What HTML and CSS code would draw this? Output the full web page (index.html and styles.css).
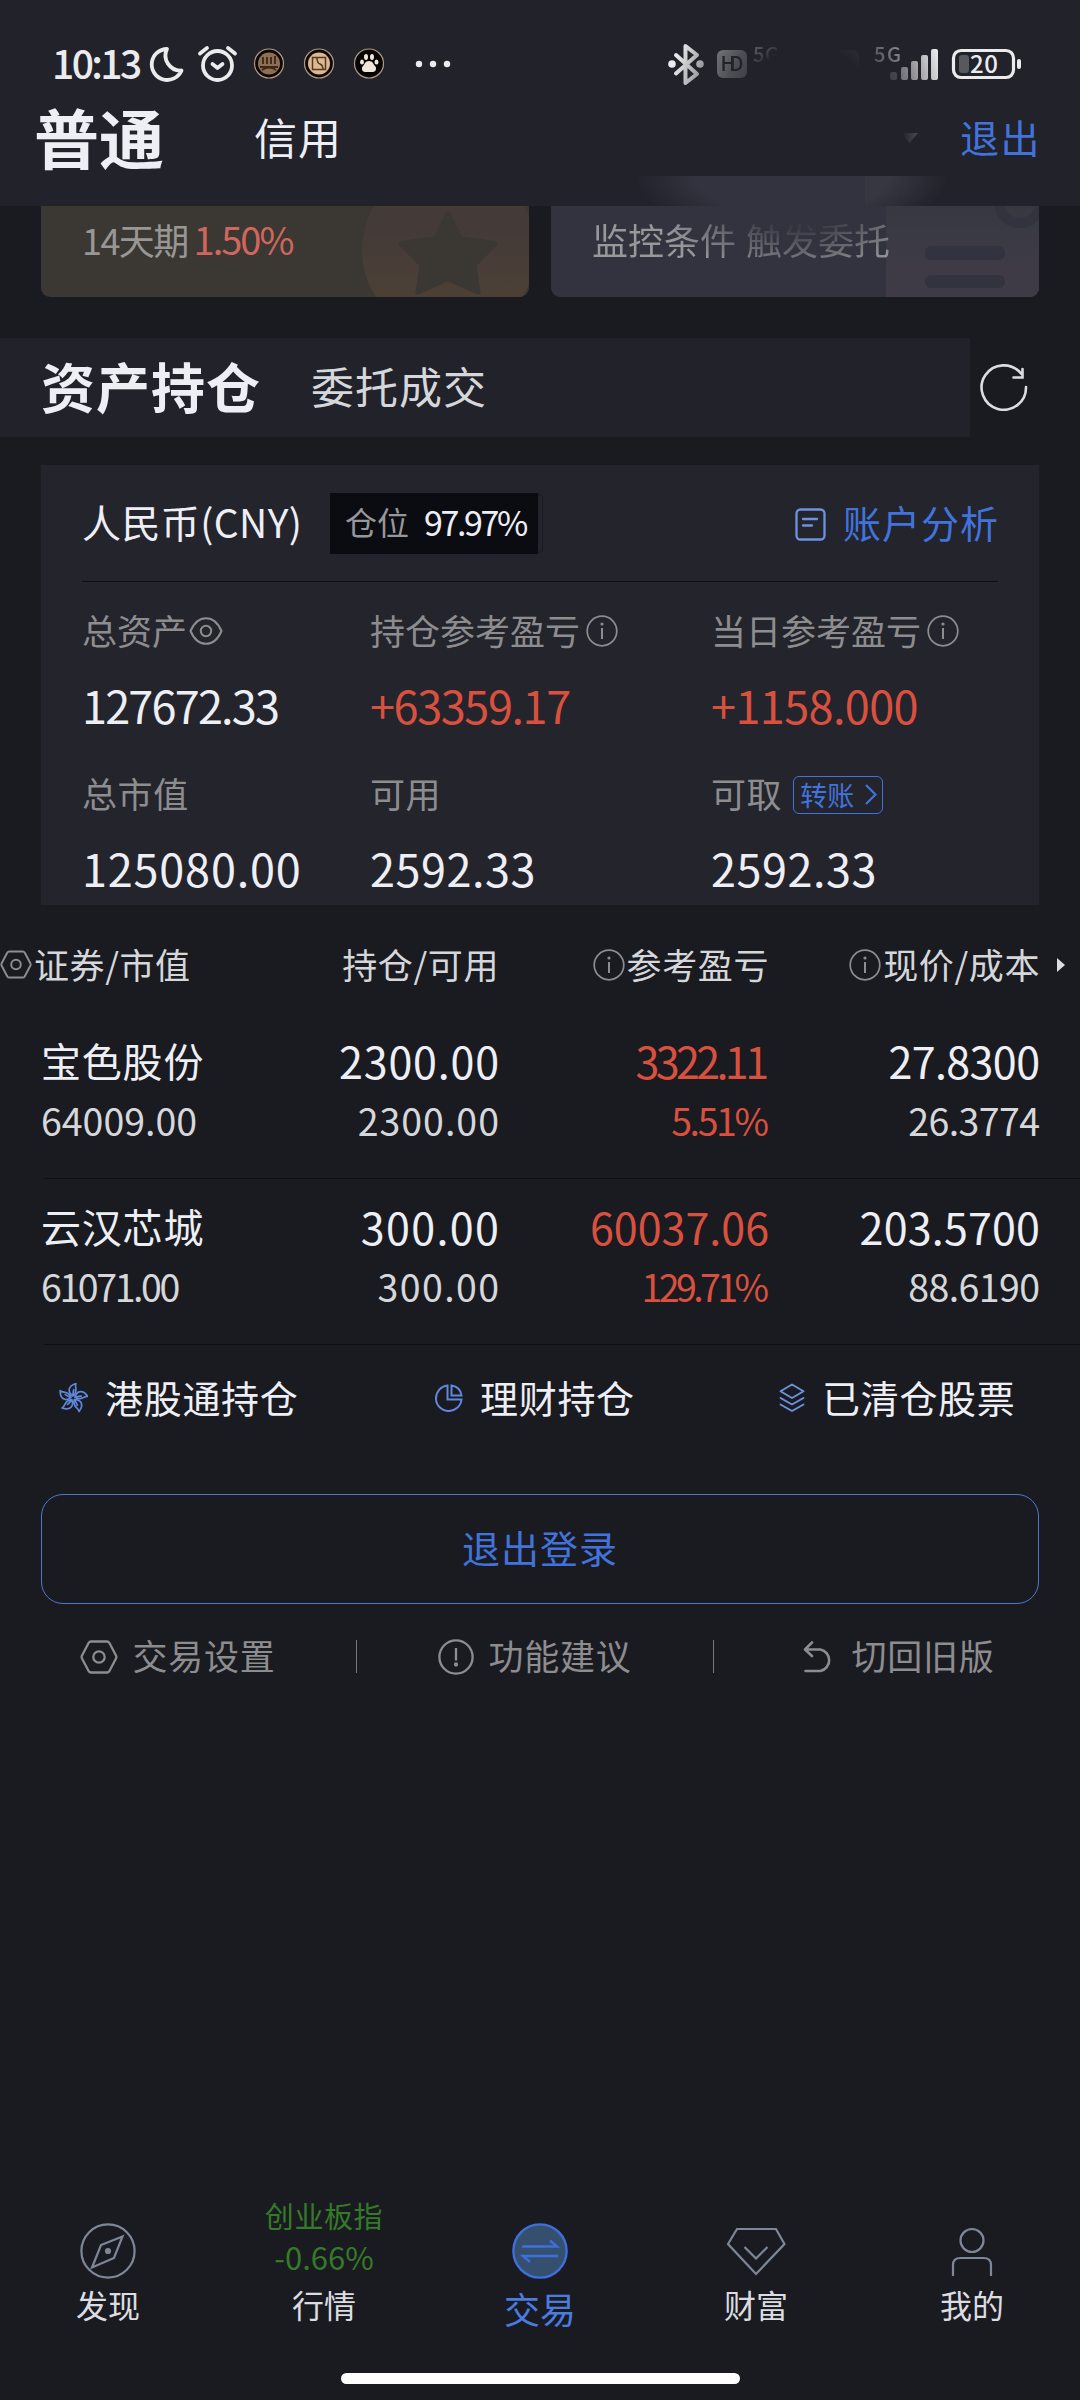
FILE: index.html
```html
<!DOCTYPE html>
<html lang="zh-CN">
<head>
  <meta charset="UTF-8">
  <title>普通交易</title>
  <link rel="stylesheet" href="styles.css">
</head>
<body>
  <svg class="defs" width="0" height="0">
    <symbol id="info" viewBox="0 0 32 32">
      <circle cx="16" cy="16" r="14.8" fill="none" stroke="currentColor" stroke-width="1.7"/>
      <circle cx="16" cy="9" r="1.6" fill="currentColor"/>
      <path d="M16 13v11" stroke="currentColor" stroke-width="2"/>
    </symbol>
    <symbol id="hex" viewBox="0 0 38 34">
      <path d="M11 1.5h16q1.5 0 2.3 1.3L36 15.5q.8 1.5 0 3L29.3 31.2q-.8 1.3-2.3 1.3H11q-1.5 0-2.3-1.3L2 18.5q-.8-1.5 0-3L8.7 2.8Q9.5 1.5 11 1.5z" fill="none" stroke="currentColor" stroke-width="2.3"/>
      <circle cx="19" cy="17" r="5.7" fill="none" stroke="currentColor" stroke-width="2.3"/>
    </symbol>
  </svg>

  <header class="header">
    <div class="status">
      <span class="clock">10:13</span>
      <svg class="status-left" width="310" height="40" viewBox="145 44 310 40">
        <path d="M167 49a15.5 15.5 0 1 0 14.5 21.5a15 15 0 0 1-14.5-21.5z" fill="none" stroke="#ebebee" stroke-width="3.8" stroke-linejoin="round"/>
        <g fill="none" stroke="#ebebee" stroke-width="3.8" stroke-linecap="round" stroke-linejoin="round">
          <circle cx="217.5" cy="65.5" r="14.5"/>
          <path d="M212.5 64l5 4 5-4M200 53.5l7-5.5M235 53.5l-7-5.5"/>
        </g>
        <g stroke-width="1.2" stroke="#b59a83">
          <circle cx="269" cy="63.5" r="14.5" fill="#0c0806"/>
          <circle cx="319" cy="63.5" r="14.5" fill="#0c0806"/>
          <circle cx="369" cy="63.5" r="14.5" fill="#050505"/>
        </g>
        <circle cx="269" cy="63.5" r="11" fill="#8f6f54"/>
        <path d="M263 57v7M267 57v7M271 57v7M275 56v8M260 67h18M262 70q7-5 14 0" fill="none" stroke="#3d2718" stroke-width="1.8"/>
        <circle cx="319" cy="63.5" r="11" fill="#dcb892"/>
        <path d="M312.5 57.5h13v12h-13zM317 58q0 5 3 6t3 6" fill="none" stroke="#57371d" stroke-width="1.5"/>
        <g fill="#f3e6d6">
          <ellipse cx="366" cy="57" rx="2" ry="3"/><ellipse cx="372" cy="57" rx="2" ry="3"/>
          <ellipse cx="362" cy="62" rx="2" ry="2.6"/><ellipse cx="376.5" cy="62" rx="2" ry="2.6"/>
          <path d="M369 61c4 0 4 3 6 5s1 6-2 6h-8c-3 0-4-4-2-6s2-5 6-5z"/>
        </g>
        <g fill="#ebebee"><circle cx="419" cy="64" r="3.2"/><circle cx="433" cy="64" r="3.2"/><circle cx="447" cy="64" r="3.2"/></g>
      </svg>
      <svg class="status-right" width="360" height="40" viewBox="664 44 360 40">
        <defs>
          <radialGradient id="fade" gradientUnits="userSpaceOnUse" cx="808" cy="105" r="140">
            <stop offset=".42" stop-color="#000"/>
            <stop offset=".5" stop-color="#333"/>
            <stop offset=".6" stop-color="#444"/>
            <stop offset=".74" stop-color="#777"/>
            <stop offset="1" stop-color="#fff"/>
          </radialGradient>
          <mask id="fadeMask" maskUnits="userSpaceOnUse" x="660" y="20" width="290" height="80"><rect x="660" y="20" width="290" height="80" fill="url(#fade)"/></mask>
        </defs>
        <g mask="url(#fadeMask)">
          <path d="M676 55l21 19-11.500 9V46l11.500 9-21 18.500" fill="none" stroke="#ebebee" stroke-width="4" stroke-linejoin="round" stroke-linecap="round"/>
          <circle cx="672" cy="64" r="3.8" fill="#ebebee"/><circle cx="700" cy="64" r="3.8" fill="#ebebee"/>
          <rect x="717" y="50" width="30" height="28" rx="6" fill="#c8c8cc"/>
          <rect x="829" y="50" width="30" height="28" rx="6" fill="#aaa" opacity=".25"/>
          <g class="net" fill="#22222a"><text x="720.5" y="71" textLength="23">HD</text></g>
          <g class="net" fill="#ebebee"><text x="753" y="62" textLength="26">5G</text><text x="874" y="62" textLength="27">5G</text></g>
          <g fill="#ebebee">
            <rect x="890" y="72" width="7" height="8" rx="2" opacity=".5"/><rect x="901" y="67" width="7" height="13" rx="2"/>
            <rect x="911" y="61" width="7" height="19" rx="2"/><rect x="921" y="55" width="7" height="25" rx="2"/>
            <rect x="931" y="49" width="7" height="31" rx="2"/>
          </g>
        </g>
        <rect x="953.5" y="50.5" width="60" height="27" rx="7.5" fill="none" stroke="#ebebee" stroke-width="3.2"/>
        <rect x="959" y="55" width="10" height="18" rx="3" fill="#58595f"/>
        <rect x="1017" y="59" width="4" height="10" rx="2" fill="#ebebee"/>
        <text class="battery" x="970" y="73" textLength="28">20</text>
      </svg>
    </div>
    <div class="account-tabs">
      <span class="tab-main">普通</span>
      <span class="tab-sub">信用</span>
      <svg class="caret" width="18" height="12" viewBox="0 0 18 12">
        <linearGradient id="cg"><stop offset=".1" stop-color="#22222a"/><stop offset="1" stop-color="#4a4b52"/></linearGradient>
        <path d="M0 1h17l-8.500 10z" fill="url(#cg)"/>
      </svg>
      <a class="quit">退出</a>
    </div>
    <div class="peek"></div>
  </header>

  <section class="banners">
    <div class="banner gold">
      <span class="term">14天期</span><span class="rate">1.50%</span>
      <svg class="art" width="170" height="91" viewBox="359 206 170 91">
        <linearGradient id="gg" x2="0" y2="1"><stop offset=".4" stop-color="#443a37"/><stop offset=".8" stop-color="#4d4136"/></linearGradient>
        <circle cx="449" cy="250" r="87" fill="url(#gg)"/>
        <path d="M448 214l12 25 35 4.500-21 21.500 4 27-30-13.500-30 13.500 4-27-21-21.500 35-4.500z" fill="#3b3733" stroke="#3b3733" stroke-width="5" stroke-linejoin="round"/>
      </svg>
    </div>
    <div class="banner slate">
      <span class="watch">监控条件 触发委托</span>
      <svg class="art" width="153" height="91" viewBox="886 206 153 91">
        <linearGradient id="sg" x2="0" y2="1"><stop offset="0" stop-color="#373842"/><stop offset=".7" stop-color="#3e3b47"/></linearGradient>
        <rect x="886" y="206" width="153" height="91" fill="url(#sg)"/>
        <circle cx="1020" cy="202" r="21" fill="none" stroke="#32333e" stroke-width="10"/>
        <rect x="925" y="246" width="80" height="14" rx="6" fill="#32333e"/>
        <rect x="925" y="275" width="80" height="13" rx="6" fill="#32333e"/>
      </svg>
    </div>
  </section>

  <section class="section-tabs">
    <div class="band"><span class="holdings-tab">资产持仓</span><span class="orders-tab">委托成交</span></div>
    <svg class="refresh" width="48" height="48" viewBox="0 0 48 48" fill="none" stroke="#dcdde0" stroke-width="2.6" stroke-linecap="round">
      <path d="M46 24A22.200 22.200 0 1 1 41 10.500M42.500 6v8.500h-9"/>
    </svg>
  </section>

  <section class="assets">
    <div class="assets-head">
      <span class="currency">人民币(CNY)</span>
      <div class="position-wrap"><div class="position"><span class="position-label">仓位</span><span class="position-num">97.97%</span></div></div>
      <a class="analysis">
        <svg width="31" height="33" viewBox="0 0 31 33" fill="none" stroke="#6d93e0" stroke-width="2.3" stroke-linecap="round">
          <rect x="1.5" y="1.5" width="28" height="30" rx="4"/><path d="M8 11h14M8 17.500h9"/>
        </svg>
        <span>账户分析</span>
      </a>
    </div>
    <div class="assets-grid">
      <div class="label">总资产<svg class="eye" width="34" height="28" viewBox="0 0 34 28" fill="none" stroke="currentColor" stroke-width="2"><path d="M1.500 14Q7 1.200 17 1.200T32.500 14Q27 26.800 17 26.800T1.500 14z"/><circle cx="17" cy="14" r="5.2"/></svg></div>
      <div class="label">持仓参考盈亏<svg class="i" width="32" height="32"><use href="#info"/></svg></div>
      <div class="label">当日参考盈亏<svg class="i" width="32" height="32"><use href="#info"/></svg></div>
      <div class="value n-18">127672.33</div>
      <div class="value up n-14">+63359.17</div>
      <div class="value up n-6">+1158.000</div>
      <div class="label wide">总市值</div>
      <div class="label wide">可用</div>
      <div class="label wide">可取<a class="transfer">转账<svg width="12" height="21" viewBox="0 0 12 21" fill="none" stroke="#4273dc" stroke-width="2.2"><path d="M1 1l9.500 9.500L1 20"/></svg></a></div>
      <div class="value p-8">125080.00</div>
      <div class="value p-5">2592.33</div>
      <div class="value p-5">2592.33</div>
    </div>
  </section>

  <section class="holdings">
    <div class="holdings-head">
      <div class="first"><svg width="32" height="29"><use href="#hex"/></svg>证券/市值</div>
      <div>持仓/可用</div>
      <div><svg width="32" height="32"><use href="#info"/></svg>参考盈亏</div>
      <div><svg width="32" height="32"><use href="#info"/></svg>现价/成本</div>
      <i class="more"></i>
    </div>
    <div class="stock">
      <div class="name">宝色股份</div><div class="num p-8">2300.00</div><div class="num up n-36">3322.11</div><div class="num n-6">27.8300</div>
      <div class="sub left">64009.00</div><div class="sub p-10">2300.00</div><div class="sub up n-24">5.51%</div><div class="sub n-6">26.3774</div>
    </div>
    <div class="line"></div>
    <div class="stock">
      <div class="name">云汉芯城</div><div class="num p-16">300.00</div><div class="num up">60037.06</div><div class="num p-2">203.5700</div>
      <div class="sub left n-24">61071.00</div><div class="sub p-16">300.00</div><div class="sub up n-36">129.71%</div><div class="sub n-6">88.6190</div>
    </div>
    <div class="line"></div>
  </section>

  <section class="links">
    <a>
      <svg width="30" height="30" viewBox="-15 -15 30 30" fill="none" stroke="#5f88dc" stroke-width="1.7" stroke-linejoin="round">
        <g id="petal"><path d="M0-2C-6-6-5-12 3-14.500C1-11 6-7 0-2zM0-3Q0-7 1-9"/></g>
        <use href="#petal" transform="rotate(72)"/><use href="#petal" transform="rotate(144)"/>
        <use href="#petal" transform="rotate(216)"/><use href="#petal" transform="rotate(288)"/>
      </svg>
      港股通持仓
    </a>
    <a>
      <svg width="28" height="28" viewBox="0 0 28 28" fill="none" stroke="#5f88dc" stroke-width="2">
        <path d="M12.500 1.500A12.800 12.800 0 1 0 26.500 15.500H12.500zM16.500 1.500v10h10q-1-8.500-10-10z"/>
      </svg>
      理财持仓
    </a>
    <a>
      <svg width="26" height="30" viewBox="0 0 26 30" fill="none" stroke="#6d93e0" stroke-width="1.9" stroke-linejoin="round" stroke-linecap="round">
        <path d="M13 1.500l11.500 6.700L13 15 1.500 8.200zM1.500 15L13 21.500 24.500 15M1.500 21.500L13 28l11.500-6.500"/>
      </svg>
      已清仓股票
    </a>
  </section>

  <button class="logout">退出登录</button>

  <section class="tools">
    <a><svg width="38" height="34"><use href="#hex"/></svg>交易设置</a>
    <a>
      <svg width="36" height="36" viewBox="0 0 36 36" fill="none" stroke="currentColor" stroke-width="2.3"><circle cx="18" cy="18" r="16.6"/><path d="M18 9v12.500"/><circle cx="18" cy="25.5" r="1"/></svg>
      功能建议
    </a>
    <a>
      <svg width="30" height="32" viewBox="0 0 30 32" fill="none" stroke="currentColor" stroke-width="2.6" stroke-linecap="round" stroke-linejoin="round"><path d="M9 1.500L2 8.500 9 15M2 8.500h15.500a11 11 0 0 1 0 21.500H2.500"/></svg>
      切回旧版
    </a>
  </section>

  <nav class="nav">
    <a>
      <svg width="56" height="56" viewBox="0 0 56 56" fill="none" stroke="#7d8799" stroke-width="2.2"><circle cx="28" cy="28" r="26.6"/><path d="M42.500 13.500L21 22 12 44.500 34 35z"/><circle cx="28" cy="28" r="2" fill="#7d8799"/></svg>
      <span>发现</span>
    </a>
    <a class="market">
      <em class="index-name">创业板指</em>
      <em class="index-rate">-0.66%</em>
      <span>行情</span>
    </a>
    <a class="active">
      <svg width="56" height="56" viewBox="0 0 56 56" fill="none" stroke="#3f6fdc" stroke-width="2.4"><circle cx="28" cy="28" r="26.6" fill="#35506f"/><path d="M10 23.500h35l-7-6M46 33H11l7 6"/></svg>
      <span>交易</span>
    </a>
    <a>
      <svg width="60" height="56" viewBox="0 0 60 56" fill="none" stroke="#7d8799" stroke-width="2.2"><path d="M11 6h39l8.500 15L30 51 2 21zM18.500 24L30 35.500 41.500 24"/></svg>
      <span>财富</span>
    </a>
    <a>
      <svg width="56" height="56" viewBox="0 0 56 56" fill="none" stroke="#7d8799" stroke-width="2.2"><circle cx="28" cy="17.5" r="11.5"/><path d="M9 53V42q0-7 7.500-7h23q7.500 0 7.500 7v11"/></svg>
      <span>我的</span>
    </a>
  </nav>
  <div class="home-bar"></div>
</body>
</html>
```

FILE: styles.css
```css
* { box-sizing: border-box; }
body {
  margin: 0;
  width: 1080px;
  height: 2400px;
  display: flex;
  flex-direction: column;
  background: #1a1b20;
  color: #eeeff5;
  font-family: "Noto Sans CJK SC", sans-serif;
  line-height: 1;
  overflow: hidden;
}
svg { flex: none; display: block; }
.defs { position: absolute; }

/* letter spacing for the figures */
.n-36 { --ls: -3.6px; }
.n-24 { --ls: -2.4px; }
.n-18 { --ls: -1.8px; }
.n-14 { --ls: -1.4px; }
.n-6 { --ls: -.6px; }
.p-2 { --ls: .2px; }
.p-5 { --ls: .5px; }
.p-8 { --ls: .8px; }
.p-10 { --ls: 1px; }
.p-16 { --ls: 1.4px; }
.up { color: #d9503f; }

/* header */
.header { position: relative; height: 206px; background: #22222a; }
.status { display: flex; height: 84px; padding: 44px 56px 0 52px; }
.clock { width: 93px; font-size: 39px; font-weight: 500; letter-spacing: -2.6px; line-height: 36px; color: #ebebee; white-space: nowrap; }
.status-right { margin-left: auto; overflow: visible; }
.net { font: 500 20px "Noto Sans CJK SC", sans-serif; }
.battery { font: 500 24px "Noto Sans CJK SC", sans-serif; fill: #ebebee; }
.account-tabs { display: flex; align-items: center; height: 105px; padding: 0 39px 0 34px; white-space: nowrap; }
.tab-main { width: 220px; font-size: 65px; font-weight: 700; }
.tab-sub { font-size: 43px; letter-spacing: 1px; }
.caret { margin-left: auto; margin-right: 41px; margin-top: 3px; }
.quit { font-size: 39px; letter-spacing: 1.5px; color: #4273dc; }
.peek {
  position: absolute;
  left: 632px;
  bottom: 0;
  width: 320px;
  height: 30px;
  background: linear-gradient(90deg, #32333e 233px, #363741 233px);
  -webkit-mask-image: radial-gradient(ellipse 158px 62px at 50% 0, #000 62%, transparent);
  mask-image: radial-gradient(ellipse 158px 62px at 50% 0, #000 62%, transparent);
}

.banners { display: flex; gap: 22px; padding: 0 41px; height: 91px; }
.banner { flex: 1; display: flex; padding-left: 41px; font-size: 36px; line-height: 66px; border-radius: 0 0 9px 9px; overflow: hidden; white-space: nowrap; }
.gold { background: #3b3733; }
.slate { background: #32333e; }
.art { margin-left: auto; }
.term { color: #989795; letter-spacing: -1.6px; }
.rate { margin-left: 6px; font-size: 38px; letter-spacing: -2px; color: #cf675c; }
.watch {
  width: 300px;
  margin-right: -20px;
  word-spacing: 2px;
  background: radial-gradient(ellipse 125px 58px at 205px 6px, #3a3b45 30%, #98989b 110%);
  -webkit-background-clip: text;
  background-clip: text;
  color: transparent;
  position: relative;
}

.section-tabs { display: flex; align-items: center; margin-top: 41px; height: 99px; }
.band { display: flex; align-items: center; width: 970px; height: 99px; padding: 0 0 4px 41px; background: #22222a; }
.holdings-tab { font-size: 54px; font-weight: 700; width: 270px; letter-spacing: 1px; }
.orders-tab { font-size: 43px; letter-spacing: 1px; color: #d6d7db; }
.refresh { margin: 0 0 1px 10px; }

/* assets card */
.assets { margin: 28px 41px 0; padding: 0 41px; height: 440px; background: #24242c; }
.assets-head { display: flex; align-items: center; height: 117px; border-bottom: 1px solid #0e0f13; }
.currency { width: 248px; font-size: 39px; letter-spacing: .4px; padding-bottom: 3px; white-space: nowrap; }
.position-wrap { height: 59px; display: flex; align-items: center; border: 1px solid #191a1f; border-left: 0; border-radius: 5px; padding-right: 4px; }
.position { display: flex; width: 208px; height: 61px; padding-left: 15px; background: #0b0c11; line-height: 57px; font-size: 32px; white-space: nowrap; }
.position-label { color: #97979a; }
.position-num { margin-left: 15px; font-size: 34px; letter-spacing: -2.4px; }
.analysis { display: flex; align-items: center; margin-left: auto; font-size: 38px; letter-spacing: 1px; color: #4273dc; }
.analysis svg { margin-right: 17px; margin-top: 3px; }
.analysis span { margin-right: -1px; padding-bottom: 3px; }
.assets-grid { display: grid; grid-template-columns: 288px 341px 1fr; grid-template-rows: 95px 54px 122px 28px; }
.assets-grid > div { display: flex; align-items: center; white-space: nowrap; }
.label { font-size: 35px; color: #8d8d90; }
.wide { letter-spacing: .6px; }
.eye { margin: 3px 0 0 2px; }
.label .i { margin: 3px 0 0 6px; }
.value { font-size: 45px; letter-spacing: var(--ls); }
.transfer { display: flex; align-items: center; gap: 11px; width: 90px; height: 38px; margin: 5px 0 0 11px; padding-left: 6px; border: 1.5px solid #4273dc; border-radius: 6px; font-size: 27px; line-height: 31px; letter-spacing: 0; color: #4273dc; }

/* holdings table */
.holdings-head, .stock { display: grid; grid-template-columns: 220px 238px 270px 271px 40px; padding-left: 41px; }
.holdings-head { height: 108px; padding-top: 8px; font-size: 35px; letter-spacing: .6px; color: #d6d7db; }
.holdings-head div { display: flex; align-items: center; justify-content: flex-end; white-space: nowrap; }
.holdings-head .first { justify-content: flex-start; margin-left: -41px; }
.holdings-head svg { margin: 3px 2px 0 0; color: #8d8d90; }
.more { align-self: center; margin: 3px 0 0 17px; width: 0; border: 7px solid transparent; border-left: 8px solid #dcdde0; border-right: 0; }
.stock { height: 165px; padding-top: 20px; grid-template-rows: 54px 66px; align-items: center; white-space: nowrap; }
.name { font-size: 40px; letter-spacing: .8px; }
.num, .sub { justify-self: end; letter-spacing: var(--ls, 0px); margin-right: calc(var(--ls, 0px) * -1); }
.num { font-size: 43px; }
.sub { font-size: 37.5px; }
.sub:not(.up) { color: #d6d7db; }
.sub.left { justify-self: start; }
.stock > :nth-child(4), .stock > :nth-child(8) { grid-column: 4; }
.stock > :nth-child(5) { grid-column: 1; }
.line { height: 1px; margin-left: 44px; background: #0e0f13; }

.links { display: flex; height: 104px; padding-left: 58px; }
.links a { display: flex; flex: none; align-items: center; width: 377px; font-size: 38px; letter-spacing: .7px; white-space: nowrap; }
.links a:nth-child(2) { width: 344px; }
.links a:last-child { width: auto; }
.links svg { margin-right: 17px; margin-top: 2px; }

.logout { margin: 45px 41px 0; height: 110px; padding-bottom: 6px; border: 1px solid #4a78d6; border-radius: 22px; background: none; color: #4273dc; font: 38px "Noto Sans CJK SC", sans-serif; letter-spacing: 1px; }

.tools { display: grid; grid-template-columns: 357px 357px 1fr; height: 34px; margin-top: 36px; color: #8d8d90; }
.tools a { display: flex; align-items: center; justify-content: center; gap: 14px; font-size: 35px; letter-spacing: .8px; line-height: 28px; height: 33px; padding-bottom: 3px; border-right: 1px solid #77777b; }
.tools svg { margin-top: 3px; }
.tools a:last-child { border: 0; gap: 18px; padding-left: 4px; }

/* bottom navigation */
.nav { display: grid; grid-template-columns: repeat(5, 216px); margin-top: auto; height: 183px; }
.nav a { display: flex; flex-direction: column; align-items: center; padding-top: 33px; }
.nav span { margin-top: 5px; font-size: 32px; line-height: 40px; color: #dcdde0; }
.nav .market { padding-top: 11px; }
.nav .market span { margin-top: 0; }
.nav em { font-style: normal; color: #357a28; }
.index-name { font-size: 29px; line-height: 28px; letter-spacing: .6px; }
.index-rate { font-size: 31px; line-height: 55px; }
.nav .active span { font-size: 36px; line-height: 48px; color: #4a7ce0; }
.home-bar { flex: none; width: 399px; height: 11px; margin: 0 auto 16px; border-radius: 6px; background: #fff; }
```
